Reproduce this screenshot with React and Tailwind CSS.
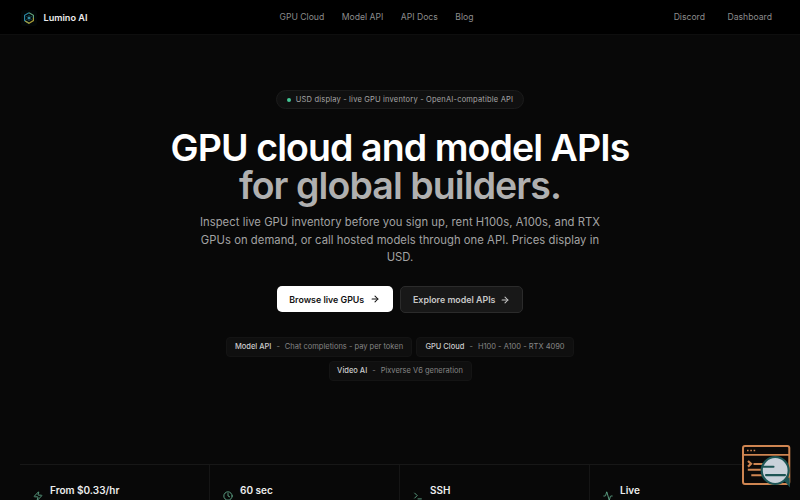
import React from 'react';
import { Activity, ArrowRight, Clock, Terminal, Zap } from 'lucide-react';

const navLinks = ['GPU Cloud', 'Model API', 'API Docs', 'Blog'];

const products = [
  { name: 'Model API', detail: 'Chat completions - pay per token', size: 'w-[186px]' },
  { name: 'GPU Cloud', detail: 'H100 - A100 - RTX 4090', size: 'w-[158px]' },
  { name: 'Video AI', detail: 'Pixverse V6 generation', size: 'w-[143px]' },
];

const stats = [
  { icon: Zap, title: 'From $0.33/hr' },
  { icon: Clock, title: '60 sec' },
  { icon: Terminal, title: 'SSH' },
  { icon: Activity, title: 'Live' },
];

const Logo = () => (
  <svg viewBox="0 0 16 16" className="h-4 w-4" fill="none">
    <rect width="16" height="16" rx="3" fill="#020708" />
    <path d="M8 2.8 3.6 5.3v5.3L8 13.2" stroke="#2a87a5" strokeWidth="1.2" />
    <path d="M8 2.8l4.4 2.5v2.9" stroke="#5fa27c" strokeWidth="1.2" />
    <path d="M12.4 8v2.6L8 13.2l-3.8-2.2" stroke="#a69a35" strokeWidth="1.2" />
    <path d="M8 5v6M5.4 6.5l5.2 3M10.6 6.5l-5.2 3" stroke="#1d6577" strokeWidth="0.9" />
    <circle cx="8" cy="8" r="0.9" fill="#41a4bf" />
  </svg>
);

const Navbar = () => (
  <header className="flex h-[35px] shrink-0 items-center justify-between border-b border-[#0e0e0e] bg-black pt-px pr-7 pl-[21px] text-[8.65px] text-[#8c8c8c]">
    <div className="flex w-[258px] items-center gap-[6.5px]">
      <Logo />
      <span className="pt-px text-[9.15px] leading-3 font-semibold text-[#ededed]">Lumino AI</span>
    </div>
    <nav className="flex gap-[17.5px]">
      {navLinks.map((link) => (
        <a key={link}>{link}</a>
      ))}
    </nav>
    <div className="flex w-[298px] justify-end gap-[22.5px]">
      <a>Discord</a>
      <a>Dashboard</a>
    </div>
  </header>
);

const ChatWidget = () => (
  <div className="absolute top-[444px] left-[741px]">
    <svg viewBox="0 0 50 44" className="h-[44px] w-[50px]" fill="none">
      <rect x="2" y="2" width="46.3" height="38" rx="2" fill="#0b0908" stroke="#cf8551" strokeWidth="2" />
      <path d="M2 10.8h46" stroke="#cf8551" strokeWidth="1.8" />
      <path d="M6 6.5h1.6M9.3 6.5h1.6M12.6 6.5h1.6" stroke="#cf8551" strokeWidth="1.5" />
      <path d="m7 17 3 2.8-3 2.8" stroke="#cf8551" strokeWidth="2.2" />
      <path d="M12.5 20H24M6.8 25.8H21M10.3 31.3h12" stroke="#cf8551" strokeWidth="1.9" />
      <path d="m43 35.5 5.3 6.2-.3-7.4Z" fill="#1d5555" stroke="#1d5555" strokeWidth="1.2" />
      <circle cx="34.2" cy="26.5" r="13.5" fill="#c9d2db" stroke="#1d5555" strokeWidth="2.2" />
      <path d="M22.5 22.8h10M25 31.1h19" stroke="#1d5555" strokeWidth="2.1" strokeLinecap="round" />
    </svg>
  </div>
);

const App = () => {
  return (
    <div className="relative flex h-[500px] w-[800px] flex-col overflow-hidden bg-[#080808] font-['Inter',sans-serif] antialiased">
      <Navbar />

      {/* Hero */}
      <main className="flex h-[429px] shrink-0 flex-col items-center pt-[55px]">
        <div className="flex h-[19px] w-[248px] shrink-0 items-center justify-center gap-[5px] rounded-full border border-[#1b1b1b] bg-[#101010] text-[7.5px] tracking-[0.19px] whitespace-nowrap text-[#a6a6a6]">
          <span className="h-1 w-1 rounded-full bg-[#43c795]" />
          USD display - live GPU inventory - OpenAI-compatible API
        </div>

        <h1 className="mt-5 text-center text-[37.5px] leading-[37.5px] font-semibold tracking-[-0.92px] text-white">
          GPU cloud and model APIs
          <span className="block text-[#b0b0b0]">for global builders.</span>
        </h1>

        <p className="mt-[10px] w-[420px] text-center text-[11.25px] leading-[17.5px] tracking-[0.05px] text-[#a3a3a3]">
          Inspect live GPU inventory before you sign up, rent H100s, A100s, and RTX GPUs on demand, or call hosted
          models through one API. Prices display in USD.
        </p>

        <div className="mt-[19.5px] flex gap-[7.5px] text-[8.85px] font-semibold">
          <button className="flex h-[26px] w-[116px] items-center justify-center gap-[6px] rounded-[5px] bg-white text-[#111111]">
            <span className="pt-px">Browse live GPUs</span>
            <ArrowRight className="h-[10px] w-[10px]" strokeWidth={2.5} />
          </button>
          <button className="flex h-[27px] w-[123px] items-center justify-center gap-[5px] rounded-[5px] border border-[#2b2b2b] bg-[#181818] text-[#c7c7c7]">
            <span className="pt-px">Explore model APIs</span>
            <ArrowRight className="h-[10px] w-[10px]" strokeWidth={2.5} />
          </button>
        </div>

        {/* Products */}
        <div className="mt-[23.5px] flex w-[400px] flex-wrap justify-center gap-x-1 gap-y-[4px] text-[7.5px]">
          {products.map((product) => (
            <div
              key={product.name}
              className={`flex h-5 items-center justify-center gap-[5px] rounded-[4px] border border-[#141414] bg-[#0f0f0f] whitespace-nowrap text-[#858585] ${product.size}`}
            >
              <span className="font-medium text-[#cccccc]">{product.name}</span>
              <span>-</span>
              <span>{product.detail}</span>
            </div>
          ))}
        </div>
      </main>

      {/* Stats */}
      <section className="mx-5 grid h-20 shrink-0 grid-cols-4 border-t border-[#171717]">
        {stats.map(({ icon: Icon, title }) => (
          <div key={title} className="flex gap-[7px] border-r border-[#151515] pt-[19px] pl-[13px] last:border-r-0">
            <Icon className="mt-[7px] h-[10px] w-[10px] text-[#64ad8f]" strokeWidth={2.1} />
            <p className="text-[10px] leading-[13px] font-semibold text-[#ededed]">{title}</p>
          </div>
        ))}
      </section>

      <ChatWidget />
    </div>
  );
};

export default App;
